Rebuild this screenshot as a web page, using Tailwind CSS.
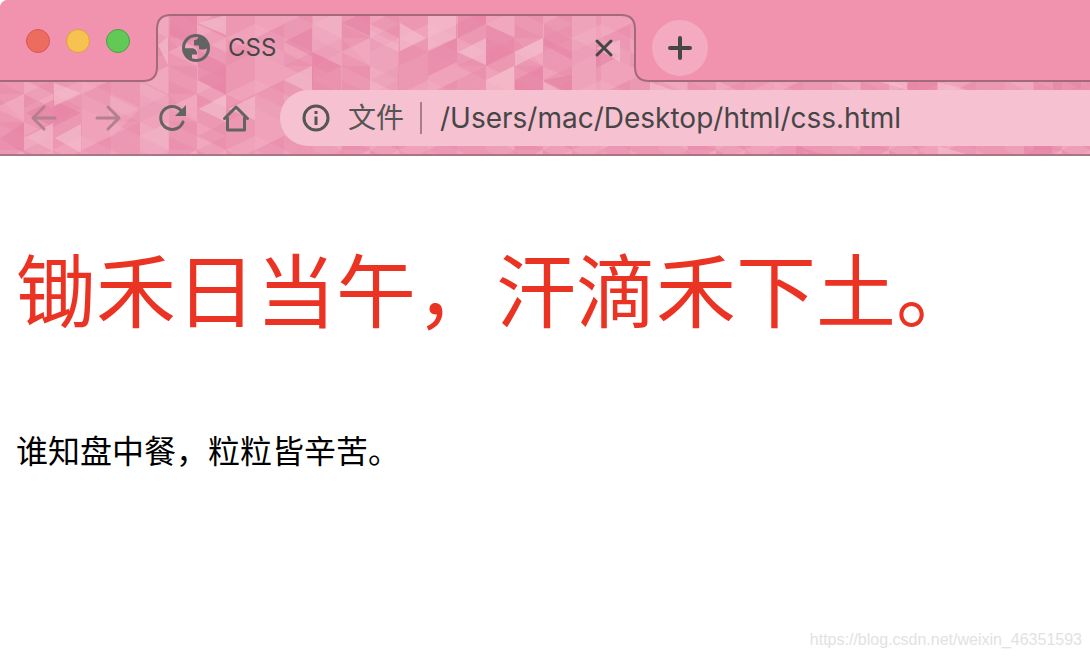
<!DOCTYPE html>
<html lang="zh-CN">
<head>
<meta charset="utf-8">
<meta name="viewport" content="width=device-width, initial-scale=1">
<title>CSS</title>
<script src="https://cdn.jsdelivr.net/npm/@tailwindcss/browser@4"></script>
</head>
<body class="flex min-h-screen flex-col bg-white font-[Inter,'Noto_Sans_CJK_SC',sans-serif]">
<header class="relative isolate overflow-hidden rounded-tl-lg border-b-2 border-[#a97587] bg-[#ec98b3]">
  <!-- Theme texture and window frame -->
  <svg class="absolute inset-0 -z-10 h-full w-full" aria-hidden="true">
    <defs>
      <pattern id="facets" x="24" y="10" width="173" height="56" patternUnits="userSpaceOnUse">
        <path fill="#f4c0cf" fill-opacity=".24" d="M0 0l29 14L0 28zM29 28l29-14v28zM58 0h29v14L58 28zM87 28l29 14-29 14zM116 0l29 14v14l-29-14zM144 42l29-14v28zM0 42l29-14v14L0 56zM58 42l29 14H58zM87 0l29 14-29 14zM144 0v28L116 14z"/>
        <path fill="#e2739a" fill-opacity=".2" d="M29 0v28L0 14zM29 42l29-14v14L29 56zM58 28l29-14v28zM87 14l29-14v14L87 28zM116 28l29 14-29 14zM144 14l29 14-29 14zM0 28l29 14L0 56zM144 0h29v14zM87 42l29 14H87z"/>
        <path fill="#f7cbd8" fill-opacity=".14" d="M0 14l29 14v14L0 28zM58 14l29 14v28L58 42zM116 14l29-14v28l-29 14zM144 28h29v28z"/>
      </pattern>
    </defs>
    <rect width="100%" height="100%" fill="url(#facets)"/>
    <path fill="#e57fa2" fill-opacity=".55" d="M0 138l24-15v30zM26 113l27-13 28 13-28 14zM170 16h27v32l-27-13zM198 50l28 15v30l-28-15zM312 52l29 14v24h-29zM342 23l14-7h14v20zM428 52l29-14v24l-29 14zM458 16h28v8l-28 14zM486 25l28 12v15l-28 14zM515 80l28-14v24h-28zM544 24l28 15v21l-28-15zM544 80l28-5v15h-28zM284 42l28-14v28zM596 44l24 12-24 12zM908 82h29v8h-29zM1053 82h28v8h-28zM796 146l26 8h-26zM1024 146h28v8h-28z"/>
    <path fill="#f4bfce" fill-opacity=".65" d="M54 83l27 10-27 13zM26 137l27-14v28zM55 138l26-14v29zM198 23l28-8v20zM199 109l27-14v27zM228 109l27-13v24zM158 45l10-8v28zM284 80l28-14v28zM400 23l26 15-26 13zM428 16h28v22l-28 12zM458 52l28-14v27zM486 80l28-14v24h-28zM515 52l28-14v14l-28 14zM544 82l16 8h-16zM596 48l24-8v22zM650 82l22 8h-22zM880 82h27v8zM938 82l28 8h-28zM938 146l28 8h-28z"/>
    <path fill="#f5c4d2" fill-opacity=".25" d="M312 16h30v50l-30-14zM140 82l29 14v58h-29zM572 16h24v74h-24zM370 30l28 14v46h-28zM110 96l29 14-29 28z"/>
    <path fill="#f192af" stroke="#a36a7c" stroke-width="2" d="M-4-4V81H143Q157 81 157 67V29Q157 15 171 15H621Q635 15 635 29V67Q635 81 649 81H9000V-4Z"/>
  </svg>

  <div class="flex h-[82px] items-start">
    <div class="flex w-[158px] shrink-0 gap-4 pt-[29px] pl-[26px]">
      <button aria-label="Close window" class="size-6 rounded-full border border-[#dc5550] bg-[#ed6c60]"></button>
      <button aria-label="Minimize window" class="size-6 rounded-full border border-[#dda044] bg-[#f6c250]"></button>
      <button aria-label="Zoom window" class="size-6 rounded-full border border-[#45a340] bg-[#62c957]"></button>
    </div>
    <div class="flex w-[478px] shrink-0 items-center pt-8 pr-5 pl-6 text-[#464646]">
      <svg class="size-7 shrink-0" viewBox="0 0 28 28" fill="#636363" aria-hidden="true">
        <circle cx="14" cy="14" r="12.500" fill="none" stroke="#636363" stroke-width="3"/>
        <path d="M2 14.300H9C13 14.300 15 16.300 15 19.500V20.500H10V26C5 24 2 20 2 14.300Z"/>
        <path d="M16 2V3.500Q15.500 6 12 6V10.500Q12 11.500 13 11.500H16Q17 11.500 17 12.500V14Q17 15.500 18.500 15.500H22Q24 15.500 26 13.500C26 8 22 2 16 2Z"/>
      </svg>
      <span class="ml-[18px] flex-1 text-2xl">CSS</span>
      <button aria-label="Close tab" class="grid size-6 place-items-center">
        <svg class="size-6" viewBox="0 0 24 24" fill="none" stroke="#464646" stroke-width="3" stroke-linecap="round"><path d="M5 5l14 14M19 5L5 19"/></svg>
      </button>
    </div>
    <button aria-label="New tab" class="mt-5 ml-4 grid size-14 place-items-center rounded-full bg-[#f4abc1]">
      <svg class="size-6" viewBox="0 0 24 24" fill="none" stroke="#464646" stroke-width="4" stroke-linecap="round"><path d="M12 2v20M2 12h20"/></svg>
    </button>
  </div>

  <div class="flex h-[72px] items-center pl-7">
    <nav class="flex shrink-0 gap-8" aria-label="Navigation">
      <button aria-label="Back"><svg class="size-8" viewBox="0 0 32 32" fill="none" stroke="#b2808f" stroke-width="3" stroke-linecap="round" stroke-linejoin="round"><path d="M27 16H5M16 5L5 16l11 11"/></svg></button>
      <button aria-label="Forward"><svg class="size-8" viewBox="0 0 32 32" fill="none" stroke="#b2808f" stroke-width="3" stroke-linecap="round" stroke-linejoin="round"><path d="M5 16h22M16 5l11 11-11 11"/></svg></button>
      <button aria-label="Reload"><svg class="size-8" viewBox="0 0 32 32" fill="none" stroke="#636363" stroke-width="3"><path d="M27 20A11.500 11.500 0 1 1 25 8.500" stroke-linecap="round"/><path d="M30 3v11H19z" fill="#636363" stroke="none"/></svg></button>
      <button aria-label="Home"><svg class="size-8" viewBox="0 0 32 32" fill="none" stroke="#636363" stroke-width="3" stroke-linejoin="round" stroke-linecap="round"><path d="M4.500 16.500L16 5l11.500 11.500M7.500 16v12h17V16"/></svg></button>
    </nav>
    <div class="ml-7 flex h-14 flex-1 items-center rounded-l-full bg-[#f6c1d1] pl-5 text-[28px] text-[#464646]">
      <svg class="size-8 shrink-0" viewBox="0 0 32 32" fill="none" stroke="#555" stroke-width="3" aria-hidden="true"><circle cx="16" cy="16" r="12"/><path d="M16 14.500V23M16 9v3"/></svg>
      <label for="address" class="ml-4 shrink-0 text-[#555]">文件</label>
      <span class="ml-4 h-8 w-0.5 shrink-0 bg-[#a77f8c]"></span>
      <input id="address" type="text" value="/Users/mac/Desktop/html/css.html" class="ml-[18px] min-w-0 flex-1 bg-transparent outline-none">
    </div>
  </div>
</header>

<main class="relative flex flex-1 flex-col gap-[91px] px-4 pt-[82px] font-['Noto_Sans_CJK_SC',sans-serif]">
  <h1 class="text-[80px] leading-[96px] text-[#eb3323]">锄禾日当午，汗滴禾下土。</h1>
  <p class="text-[32px] leading-[48px] text-black">谁知盘中餐，粒粒皆辛苦。</p>
  <span class="absolute right-2 bottom-1.5 font-['Liberation_Sans',sans-serif] text-base text-[#e2e2e2]">https://blog.csdn.net/weixin_46351593</span>
</main>
</body>
</html>
